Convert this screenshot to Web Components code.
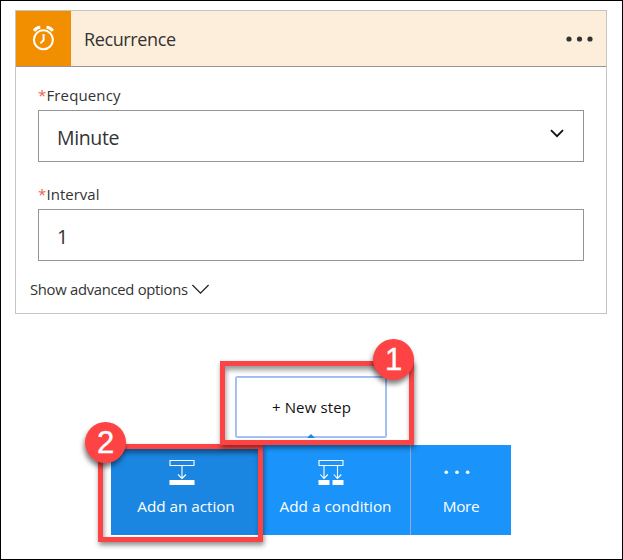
<!DOCTYPE html>
<html lang="en"><head><meta charset="utf-8"><title>Recurrence</title>
<style>
html,body{margin:0;width:623px;height:560px;overflow:hidden;background:#fff}
body{font-family:"Open Sans","Noto Sans",sans-serif;color:#333}
</style></head><body>
<flow-designer></flow-designer>
<script>
const define=(name,html,setup)=>customElements.define(name,class extends HTMLElement{
  connectedCallback(){
    if(this.shadowRoot)return;
    this.attachShadow({mode:'open'}).innerHTML=html;
    if(setup)setup(this,this.shadowRoot);
  }
});

/* One line of text whose tracking is set so that it fills the "w" attribute. */
define('fit-text',`<style>:host{display:block;white-space:nowrap;width:max-content}span{display:inline-block}</style><span></span>`,(el,root)=>{
  const s=root.querySelector('span');
  s.textContent=el.getAttribute('text');
  const n=s.textContent.length,w=+el.getAttribute('w');
  if(w&&n>1)s.style.letterSpacing=((w-s.getBoundingClientRect().width)/(n-1))+'px';
});

define('card-header',`<style>
:host{display:flex;height:55px;background:#fdeedb;border-bottom:1px solid #949494;align-items:center}
.tile{width:55px;height:55px;background:#f28f00}
fit-text{font-size:18px;line-height:24px;margin-left:13px;flex:1}
.dots{margin-right:12px}
svg{display:block}
</style>
<svg class="tile" viewBox="0 0 55 55" fill="none" stroke="#fff"><circle cx="27.4" cy="28.8" r="9.5" stroke-width="2"/><path d="M27.6 23v6.2l-3.2 3.2" stroke-width="2"/><path d="M18.1 19.9q2.1-3.5 6.2-3.7M36.7 19.9q-2.1-3.5-6.2-3.7" stroke-width="3.1"/></svg>
<fit-text text="Recurrence" w="92"></fit-text>
<svg class="dots" width="30" height="8" fill="#333"><circle cx="5" cy="4" r="2.6"/><circle cx="15.5" cy="4" r="2.6"/><circle cx="26" cy="4" r="2.6"/></svg>`);

define('form-field',`<style>
:host{display:block}
.label{display:flex;height:20px;line-height:20px;font-size:15px;gap:2.5px;margin-bottom:5px}
i{font-style:normal;color:#ee5f50;width:6px}
.box{box-sizing:border-box;height:52px;border:1px solid #949494;display:flex;align-items:center;justify-content:space-between;padding:3px 19px 0 18px;font-size:19.5px}
svg{margin-top:-8px}
</style><div class="label"><i>*</i><fit-text class="l"></fit-text></div><div class="box"><fit-text class="v"></fit-text></div>`,(el,root)=>{
  const put=(sel,t,w)=>{const o=root.querySelector(sel),f=document.createElement('fit-text');f.setAttribute('text',t);f.setAttribute('w',w||0);o.replaceWith(f)};
  put('.l',el.getAttribute('label'),el.getAttribute('lw'));
  put('.v',el.getAttribute('value'),el.getAttribute('vw'));
  if(el.hasAttribute('select'))root.querySelector('.box').insertAdjacentHTML('beforeend','<svg width="14" height="9" fill="none" stroke="#111" stroke-width="1.8"><path d="M1 1.2l6 6 6-6"/></svg>');
});

define('recurrence-card',`<style>
:host{display:block;box-sizing:border-box;width:592px;height:304px;border:1px solid #c4c4c4}
.fields{padding:18px 22px 0;display:grid;gap:22px}
.more{display:flex;align-items:center;gap:4px;margin:18px 0 0 14px;height:20px;font-size:14.8px;line-height:20px}
</style><card-header></card-header>
<div class="fields"><form-field label="Frequency" lw="74" value="Minute" vw="62.5" select></form-field><form-field label="Interval" lw="53" value="1"></form-field></div>
<div class="more"><fit-text text="Show advanced options" w="158"></fit-text><svg width="17" height="11" fill="none" stroke="#222" stroke-width="1.3"><path d="M.4 1l8.1 8.2L16.6 1"/></svg></div>`);

define('step-button',`<style>
:host{display:flex;box-sizing:border-box;width:152px;height:62px;border:1px solid #9dbcf1;border-radius:2px;box-shadow:inset 0 0 0 1px #a9c4f2;align-items:center;justify-content:center;background:#fff;color:#111;font-size:15px;line-height:20px;position:relative}
fit-text{margin-left:1px}
svg{position:absolute;left:71px;top:57px}
</style><fit-text text="+ New step" w="79"></fit-text><svg width="8" height="5"><path d="M0 4l4-4 4 4z" fill="#1b86e3"/></svg>`);

const icons={
 action:'<path d="M1 1.5h24v5H1z"/><path d="M13 6.5v13M9 15.5l4 4 4-4"/><path d="M.5 21h25v5H.5z" fill="#fff" stroke="none"/>',
 condition:'<path d="M1 1.5h24v5H1z"/><path d="M6 6.5v13M2.3 15.5l3.7 4 3.8-4M19.5 6.5v13M15.8 15.5l3.7 4 3.8-4"/><path d="M.5 21h11v5H.5zM14.5 21h11v5h-11z" fill="#fff" stroke="none"/>',
 more:'<g fill="#fff" stroke="none"><circle cx="2.3" cy="13.3" r="1.8"/><circle cx="13" cy="13.3" r="1.8"/><circle cx="23.7" cy="13.3" r="1.8"/></g>'};
define('menu-item',`<style>
:host{display:flex;box-sizing:border-box;height:90px;flex-direction:column;align-items:center;padding-top:14px;background:#1a94fb;color:#fff;font-size:15.3px;line-height:20px}
:host([icon=action]){background:#1a86e2}
:host([icon=condition]){border-right:1px solid #8da9df}
svg{margin:0 9px 11px 0;flex:none}
</style><svg width="26" height="26" fill="none" stroke="#fff" stroke-width="1.1"></svg><fit-text></fit-text>`,(el,root)=>{
  root.querySelector('svg').innerHTML=icons[el.getAttribute('icon')];
  const f=document.createElement('fit-text');f.setAttribute('text',el.getAttribute('label'));f.setAttribute('w',el.getAttribute('w'));
  root.querySelector('fit-text').replaceWith(f);
});
define('step-menu',`<style>
:host{display:grid;grid-template-columns:150px 150px 100px;width:400px}
</style><menu-item icon="action" label="Add an action" w="97.5"></menu-item><menu-item icon="condition" label="Add a condition" w="112"></menu-item><menu-item icon="more" label="More" w="37"></menu-item>`);

/* Numbered callout: a red frame laid over the page with a round badge on a corner. */
define('call-out',`<style>
:host{position:absolute;box-sizing:border-box;border:5px solid #fd4343;box-shadow:1px 3px 5px rgba(0,0,0,.45),inset 1px 4px 5px rgba(0,0,0,.4)}
b{position:absolute;left:var(--bx);top:var(--by);width:41px;height:41px;border-radius:50%;background:#fd4343;color:#fff;font:400 31px/41px "Liberation Sans",sans-serif;-webkit-text-stroke:.4px #fff;text-align:center;box-shadow:-1px 4px 5px rgba(0,0,0,.5)}
</style><b></b>`,(el,root)=>{root.querySelector('b').textContent=el.getAttribute('n')});

define('flow-designer',`<style>
:host{display:block;position:relative;box-sizing:border-box;width:623px;height:560px;border:1px solid #000;padding:9px 14px;background:#fff}
step-button{margin:62px 0 0 220px}
step-menu{margin:7px 0 0 96px}
.one{left:219px;top:360px;width:194px;height:84px;--bx:148px;--by:-27px}
.two{left:97px;top:443px;width:165px;height:98px;--bx:-18px;--by:-27px}
</style><recurrence-card></recurrence-card><step-button></step-button><step-menu></step-menu>
<call-out class="two" n="2"></call-out><call-out class="one" n="1"></call-out>`);
</script></body></html>
